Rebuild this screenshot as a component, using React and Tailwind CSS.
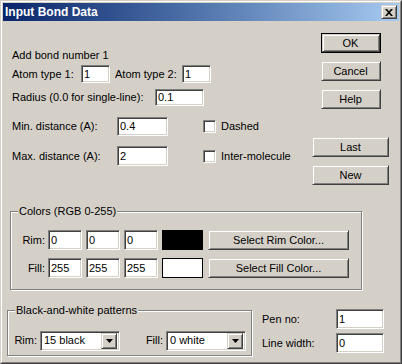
import React from 'react';

const sunken =
  'bg-white border border-t-[#808080] border-l-[#808080] border-b-white border-r-white shadow-[inset_1px_1px_0_#404040,inset_-1px_-1px_0_#d4d0c8]';
const raised =
  'bg-[#d4d0c8] border border-t-[#d4d0c8] border-l-[#d4d0c8] border-b-[#404040] border-r-[#404040] shadow-[inset_1px_1px_0_#ffffff,inset_-1px_-1px_0_#808080]';

function Field({ value, w, h = 20 }) {
  return (
    <div className={`${sunken} flex items-center pl-[2px] leading-none`} style={{ width: w, height: h }}>
      {value}
    </div>
  );
}

function Button({ children, w, h = 20, def }) {
  const btn = (
    <div className={`${raised} flex items-center justify-center`} style={{ width: def ? w - 2 : w, height: def ? h - 2 : h }}>
      {children}
    </div>
  );
  if (def) return <div className="border border-black">{btn}</div>;
  return btn;
}

function Check({ label }) {
  return (
    <div className="flex items-center">
      <div className={`${sunken} w-[13px] h-[13px]`} />
      <span className="ml-[5px]">{label}</span>
    </div>
  );
}

function Group({ title, className, children }) {
  return (
    <div className={`relative border border-[#808080] shadow-[inset_1px_1px_0_#ffffff,1px_1px_0_#ffffff] ${className}`}>
      <span className="absolute left-[7px] top-[-8px] bg-[#d4d0c8] px-[1px] leading-[14px]">{title}</span>
      {children}
    </div>
  );
}

function Dropdown({ value }) {
  return (
    <div className={`${sunken} w-[80px] h-[20px] flex items-center justify-between pl-[3px] pr-[2px]`}>
      <span>{value}</span>
      <div className={`${raised} w-[16px] h-[16px] flex items-center justify-center`}>
        <svg width="7" height="4" viewBox="0 0 7 4">
          <path d="M0 0h7L3.5 4z" fill="#000" />
        </svg>
      </div>
    </div>
  );
}

export default function App() {
  return (
    <div className="w-[402px] h-[364px] bg-[#d4d0c8] text-black text-[11px] font-['Liberation_Sans',Arial,sans-serif] border border-t-[#d4d0c8] border-l-[#d4d0c8] border-b-[#404040] border-r-[#404040]">
      <div className="h-full border border-t-white border-l-white border-b-[#808080] border-r-[#808080] p-[1px] flex flex-col">
        {/* title bar */}
        <div className="h-[18px] flex items-center justify-between bg-gradient-to-r from-[#0a246a] to-[#a6caf0] pl-[2px] pr-[2px]">
          <span className="text-white font-bold text-[12px] leading-none">Input Bond Data</span>
          <div className={`${raised} w-[16px] h-[14px] flex items-center justify-center`}>
            <svg width="8" height="7" viewBox="0 0 8 7">
              <path d="M0 0h2l2 2.3L6 0h2L5 3.5 8 7H6L4 4.7 2 7H0l3-3.5z" fill="#000" />
            </svg>
          </div>
        </div>

        {/* body */}
        <div className="flex flex-col">
          <div className="h-[190px] flex">
            <div className="pl-[9px] flex flex-col">
              <div className="mt-[27px] h-[14px] leading-[14px]">Add bond number 1</div>
              <div className="mt-[3px] flex items-center">
                <span className="w-[69px]">Atom type 1:</span>
                <Field value="1" w={29} h={18} />
                <span className="ml-[5px] w-[67px]">Atom type 2:</span>
                <Field value="1" w={29} h={18} />
              </div>
              <div className="mt-[6px] flex items-center">
                <span className="w-[143px]">Radius (0.0 for single-line):</span>
                <Field value="0.1" w={49} h={17} />
              </div>
              <div className="mt-[11px] flex items-center">
                <span className="w-[105px]">Min. distance (A):</span>
                <Field value="0.4" w={51} h={19} />
                <div className="ml-[35px]">
                  <Check label="Dashed" />
                </div>
              </div>
              <div className="mt-[10px] flex items-center">
                <span className="w-[105px]">Max. distance (A):</span>
                <Field value="2" w={51} h={20} />
                <div className="ml-[35px]">
                  <Check label="Inter-molecule" />
                </div>
              </div>
            </div>
            <div className="ml-auto mr-[10px] w-[77px] pt-[12px] flex flex-col items-center gap-[8px]">
              <Button w={60} def>OK</Button>
              <Button w={60}>Cancel</Button>
              <Button w={60}>Help</Button>
              <div className="mt-[20px] flex flex-col gap-[8px]">
                <Button w={77}>Last</Button>
                <Button w={77}>New</Button>
              </div>
            </div>
          </div>

          {/* colors */}
          <Group title="Colors (RGB 0-255)" className="ml-[7px] w-[352px] h-[79px] pt-[18px] flex flex-col gap-[8px]">
            {[
              ['Rim:', '0', 'bg-black', 'Select Rim Color...'],
              ['Fill:', '255', 'bg-white', 'Select Fill Color...'],
            ].map(([label, v, sw, btn]) => (
              <div key={label} className="flex items-center">
                <span className="w-[37px] text-right pr-[3px]">{label}</span>
                <Field value={v} w={34} />
                <div className="ml-[4px]"><Field value={v} w={34} /></div>
                <div className="ml-[4px]"><Field value={v} w={34} /></div>
                <div className={`ml-[4px] w-[41px] h-[20px] border border-black ${sw}`} />
                <div className="ml-[5px]"><Button w={141}>{btn}</Button></div>
              </div>
            ))}
          </Group>

          {/* bottom */}
          <div className="mt-[19px] flex items-start">
            <Group title="Black-and-white patterns" className="ml-[4px] mt-[1px] w-[245px] h-[46px] pt-[15px] flex items-center">
              <span className="w-[32px] text-right pr-[3px]">Rim:</span>
              <Dropdown value="15 black" />
              <span className="w-[46px] text-right pr-[3px]">Fill:</span>
              <Dropdown value="0 white" />
            </Group>
            <div className="ml-[10px] flex flex-col gap-[4px]">
              <div className="flex items-center">
                <span className="w-[74px]">Pen no:</span>
                <Field value="1" w={48} />
              </div>
              <div className="flex items-center">
                <span className="w-[74px]">Line width:</span>
                <Field value="0" w={48} />
              </div>
            </div>
          </div>
        </div>
      </div>
    </div>
  );
}
